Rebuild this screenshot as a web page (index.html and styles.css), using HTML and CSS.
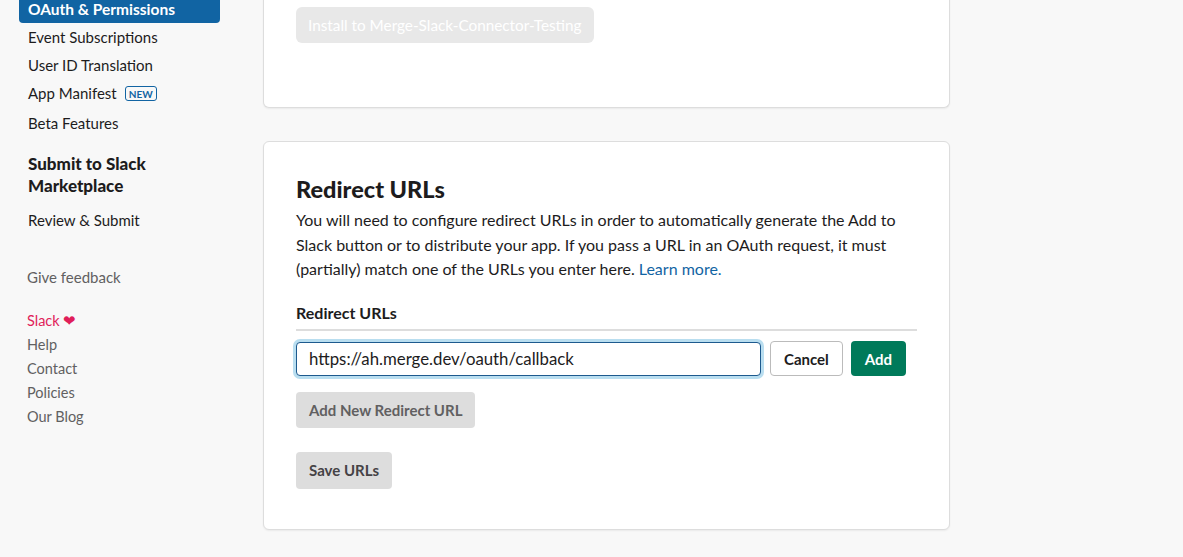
FILE: index.html
```html
<!DOCTYPE html>
<html lang="en">
<head>
  <meta charset="UTF-8" />
  <title>Redirect URLs</title>
  <link rel="stylesheet" href="styles.css">
</head>
<body>
  <div class="page">
    <aside class="sidebar">
      <ul class="nav">
        <li class="nav-item active">OAuth &amp; Permissions</li>
        <li class="nav-item">Event Subscriptions</li>
        <li class="nav-item">User ID Translation</li>
        <li class="nav-item">App Manifest <span class="badge">NEW</span></li>
        <li class="nav-item">Beta Features</li>
      </ul>
      <h3 class="nav-heading">Submit to Slack Marketplace</h3>
      <ul class="nav">
        <li class="nav-item">Review &amp; Submit</li>
      </ul>
      <p class="feedback">Give feedback</p>
      <ul class="footer-links">
        <li class="slack">Slack <span class="heart">&#10084;</span></li>
        <li>Help</li>
        <li>Contact</li>
        <li>Policies</li>
        <li>Our Blog</li>
      </ul>
    </aside>

    <main class="content">
      <section class="card card-install">
        <button class="btn btn-disabled" disabled>Install to Merge-Slack-Connector-Testing</button>
      </section>

      <section class="card">
        <h2>Redirect URLs</h2>
        <p class="desc">You will need to configure redirect URLs in order to automatically generate the Add to Slack button or to distribute your app. If you pass a URL in an OAuth request, it must (partially) match one of the URLs you enter here. <a href="#">Learn more.</a></p>
        <div class="field-label">Redirect URLs</div>
        <div class="url-row">
          <input type="text" class="url-input" value="https://ah.merge.dev/oauth/callback" />
          <button class="btn btn-outline">Cancel</button>
          <button class="btn btn-primary">Add</button>
        </div>
        <button class="btn btn-gray">Add New Redirect URL</button>
        <button class="btn btn-gray save">Save URLs</button>
      </section>
    </main>
  </div>
</body>
</html>
```

FILE: styles.css
```css
body {
  margin: 0;
  background: #f8f8f8;
  font-family: Lato, "Open Sans", sans-serif;
  color: #1d1c1d;
  overflow: hidden;
}

.page {
  display: flex;
  margin-top: -5px;
}

/* Sidebar */
.sidebar {
  width: 244px;
  padding-left: 19px;
  flex-shrink: 0;
}

.nav {
  list-style: none;
  margin: 0;
  padding: 0;
}

.nav-item {
  width: 183px;
  padding: 4px 9px;
  font-size: 15px;
  line-height: 20px;
  border-radius: 4px;
  display: flex;
  align-items: center;
  gap: 8px;
}

.nav-item.active {
  background: #1164a3;
  color: #fff;
  font-weight: bold;
  font-size: 15.5px;
}

.nav-item:last-child {
  margin-top: 2px;
}

.badge {
  font-size: 10px;
  font-weight: bold;
  color: #1264a3;
  border: 1px solid #1264a3;
  border-radius: 3px;
  padding: 1px 3px 0;
  line-height: 12px;
}

.nav-heading {
  width: 170px;
  margin: 16px 0 9px 9px;
  font-size: 17px;
  line-height: 22px;
  font-weight: 900;
}

.feedback {
  margin: 34px 0 0 8px;
  font-size: 15px;
  color: #616061;
}

.footer-links {
  list-style: none;
  margin: 22px 0 0 8px;
  padding: 0;
  font-size: 14.5px;
  line-height: 24px;
  color: #616061;
}

.footer-links .slack {
  color: #e01e5a;
}

.heart {
  font-size: 15px;
}

/* Cards */
.content {
  width: 687px;
}

.card {
  background: #fff;
  border: 1px solid #dddddd;
  border-radius: 6px;
  box-shadow: 0 1px 2px rgba(0, 0, 0, 0.06);
  padding: 32px 32px 40px;
  margin-bottom: 33px;
}

.card-install {
  border-top: none;
  border-radius: 0 0 6px 6px;
  padding: 12px 32px 64px;
}

.card h2 {
  margin: 0 0 4px;
  font-size: 23.5px;
  line-height: 30px;
  font-weight: 900;
}

.desc {
  margin: 0 0 21px;
  font-size: 16px;
  line-height: 24.5px;
}

.desc a {
  color: #1264a3;
  text-decoration: none;
}

.field-label {
  font-size: 16px;
  font-weight: bold;
  line-height: 20px;
  padding-bottom: 6px;
  border-bottom: 2px solid #dddddd;
  margin-bottom: 9px;
}

.url-row {
  display: flex;
  align-items: center;
  gap: 8px;
  margin-bottom: 14px;
}

.url-input {
  width: 465px;
  height: 34px;
  box-sizing: border-box;
  margin: 2px 1px 2px 0;
  padding: 0 12px;
  font-family: inherit;
  font-size: 16.8px;
  color: #1d1c1d;
  border: 1px solid #1d5a8e;
  border-radius: 4px;
  box-shadow: 0 0 0 3px #b9def0;
  outline: none;
}

.btn {
  display: block;
  font-family: inherit;
  font-size: 15px;
  font-weight: bold;
  height: 36px;
  padding: 0 13px;
  border-radius: 4px;
  border: none;
  cursor: pointer;
}

.btn-disabled {
  background: #e8e8e8;
  color: #fff;
  border-radius: 6px;
  padding: 0 12px;
  font-size: 15.3px;
  font-weight: normal;
}

.btn-outline {
  background: #fff;
  color: #1d1c1d;
  border: 1px solid #bbbbbb;
  height: 35px;
}

.btn-primary {
  background: #007a5a;
  color: #fff;
  height: 35px;
  padding: 0 14px;
}

.btn-gray {
  background: #dddddd;
  color: #616061;
}

.save {
  margin-top: 24px;
  height: 37px;
  color: #454245;
}
```
